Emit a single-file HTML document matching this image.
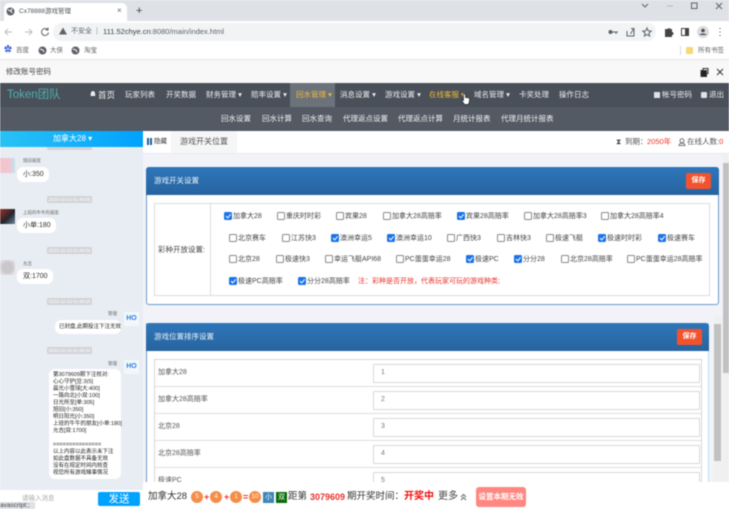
<!DOCTYPE html>
<html lang="zh"><head><meta charset="utf-8"><title>Cx78888游戏管理</title>
<style>
html,body{margin:0;padding:0;background:#fff}
body{width:729px;height:509px;overflow:hidden;position:relative}
#w{position:absolute;left:0;top:0;width:729px;height:509px;overflow:hidden;background:#fff;filter:blur(.4px);font-family:"Liberation Sans","Noto Sans CJK SC",sans-serif;color:#333}
.a{position:absolute}
.t{position:absolute;white-space:nowrap;line-height:0}
.n{font-size:7.5px;color:#eceff1}
.s{font-size:7.5px;color:#f0f2f4}
.y{color:#f0bb3a}
.c{position:absolute;width:6px;height:6px;border:1px solid #8a8a8a;border-radius:1.5px;background:#fff}
.k{background:#1a73e8;border-color:#1a73e8}
.k:after{content:"";position:absolute;left:1.8px;top:-.2px;width:1.6px;height:3.6px;border:solid #fff;border-width:0 1.2px 1.2px 0;transform:rotate(40deg)}
.l{font-size:7px;color:#444}
.p{position:absolute;left:47px;width:45px;height:7px;background:#d2d4d7;border-radius:1px;color:#fff;font-size:4.5px;line-height:7px;text-align:center;white-space:nowrap;overflow:hidden}
.b{position:absolute;background:#fff;border-radius:6px}
.m{font-size:4.5px;color:#666}
.ball{position:absolute;top:491px;width:12px;height:12px;border-radius:50%;background:#f58d47;color:#fff;font-size:6.5px;line-height:12px;text-align:center}
.op{position:absolute;top:497px;line-height:0;color:#e8322a;font-size:9px;font-weight:bold}
.row{position:absolute;left:155px;width:546px;height:26px;border-bottom:1px solid #dedede}
.in{position:absolute;left:373px;width:325px;height:17px;border:1px solid #d8d8d8;background:#fff;border-radius:1px}
.rl{font-size:7px;color:#555}
.iv{font-size:7px;color:#777;left:381px}
</style></head><body><div id="w">

<!-- browser chrome -->
<div class="a" style="left:0;top:0;width:729px;height:21px;background:#dee1e6"></div>
<div class="a" style="left:4px;top:3px;width:123px;height:18px;background:#fff;border-radius:5px 5px 0 0"></div>
<svg class="a" style="left:6px;top:7px" width="9" height="9"><circle cx="4.5" cy="4.5" r="4" fill="#5f6368"/><path d="M2 3l3 1 1 2M6 1.500l-1 2" stroke="#fff" fill="none"/></svg>
<div class="t" style="left:19px;top:12px;font-size:6.5px;color:#4f5358">Cx78888游戏管理</div>
<div class="t" style="left:117px;top:11px;font-size:8px;color:#5f6368">×</div>
<div class="t" style="left:136px;top:11px;font-size:11px;color:#3c4043">+</div>
<svg class="a" style="left:640px;top:0" width="89" height="15" fill="none" stroke="#5f6368"><path d="M2 4l3 3 3-3"/><path d="M27 6h6" stroke="#b5b8bc"/><rect x="51.500" y="3" width="5.500" height="5.500"/><path d="M76 3l6 6M82 3l-6 6"/></svg>

<div class="a" style="left:0;top:21px;width:729px;height:20px;background:#fff"></div>
<div class="a" style="left:53px;top:23px;width:603px;height:18px;background:#f1f3f4;border-radius:9px"></div>
<svg class="a" style="left:3px;top:25px" width="50" height="14" fill="none" stroke="#b9bcc0" stroke-width="1"><path d="M2 7h7M5 4L2 7l3 3"/><path d="M22 7h7M26 4l3 3-3 3"/><path d="M44.500 4.500a3.500 3.500 0 1 0 1 3" stroke="#5f6368"/><path d="M45 2.500v2.500h-2.500" stroke="#5f6368"/></svg>
<svg class="a" style="left:59px;top:27px" width="8" height="8"><path d="M4 .5L8 7.500H0z" fill="#5f6368"/></svg>
<div class="t" style="left:71px;top:32px;font-size:7px;color:#5f6368">不安全</div>
<div class="t" style="left:96px;top:32px;font-size:7px;color:#9aa0a6">|</div>
<div class="t" style="left:103px;top:32px;font-size:7.500px;color:#3c4043">111.52chye.cn<span style="color:#5f6368">:8080/main/index.html</span></div>
<svg class="a" style="left:607px;top:25px" width="122" height="15" fill="none" stroke="#5f6368"><circle cx="3.500" cy="7" r="2" fill="#5f6368" stroke="none"/><path d="M4 7h7M9 7v2"/><path d="M20 6v5h7V6M23.500 9l3-5M24 3.500h3v3"/><path d="M40 3l1.200 2.800 3 .3-2.300 2 .7 3-2.600-1.600-2.600 1.600.7-3-2.300-2 3-.3z"/><path d="M58 4h3a1 1 0 0 1 2 0h2v3a1 1 0 0 1 0 3v2h-7z" fill="#444" stroke="none"/><rect x="74.500" y="3.500" width="7" height="7" stroke="#444"/><rect x="78" y="3.500" width="3.500" height="7" fill="#444" stroke="none"/><circle cx="96" cy="7" r="6" fill="#dadce0" stroke="none"/><circle cx="96" cy="5.500" r="1.800" fill="#4a4f55" stroke="none"/><path d="M92.500 10c.5-2 6.500-2 7 0z" fill="#4a4f55" stroke="none"/><path d="M113 3v1M113 6.500v1M113 10v1" stroke="#444"/></svg>

<div class="a" style="left:0;top:41px;width:729px;height:19px;background:#fff;border-bottom:1px solid #e3e5e8;box-sizing:border-box"></div>
<div class="t" style="left:4px;top:50px;font-size:8px;color:#3155d5">✿</div>
<div class="t" style="left:16px;top:51px;font-size:6.500px;color:#5f6368">百度</div>
<svg class="a" style="left:38px;top:46px" width="9" height="9"><circle cx="4.500" cy="4.500" r="4" fill="#5f6368"/><path d="M2 3l3 1 1 2" stroke="#fff" fill="none"/></svg>
<div class="t" style="left:50px;top:51px;font-size:6.500px;color:#5f6368">大侠</div>
<svg class="a" style="left:71px;top:46px" width="9" height="9"><circle cx="4.500" cy="4.500" r="4" fill="#5f6368"/><path d="M2 3l3 1 1 2" stroke="#fff" fill="none"/></svg>
<div class="t" style="left:84px;top:51px;font-size:6.500px;color:#5f6368">淘宝</div>
<div class="a" style="left:680px;top:46px;width:1px;height:9px;background:#d5d7da"></div>
<div class="a" style="left:686px;top:47px;width:7px;height:7px;background:#f8d775;border-radius:1px"></div>
<div class="t" style="left:698px;top:51px;font-size:6.500px;color:#5f6368">所有书签</div>

<!-- dialog title -->
<div class="a" style="left:0;top:60px;width:729px;height:23px;background:#f8f8f8"></div>
<div class="t" style="left:6px;top:72px;font-size:7.500px;color:#444">修改账号密码</div>
<svg class="a" style="left:700px;top:67px" width="24" height="11" fill="none" stroke="#333"><rect x="3" y="1.500" width="5" height="5"/><rect x="1" y="3.500" width="5.500" height="6" fill="#222"/><path d="M17 2l6 6M23 2l-6 6"/></svg>

<!-- nav -->
<div class="a" style="left:0;top:83px;width:729px;height:24px;background:#4a5059"></div>
<div class="a" style="left:0;top:107px;width:729px;height:24px;background:#545a63"></div>
<div class="a" style="left:290px;top:83px;width:45px;height:24px;background:#6c7279"></div>
<div class="t" style="left:7px;top:95px;font-size:11.500px;color:#4fb0b0">Token团队</div>
<div class="t n" style="left:90px;top:95px;font-size:6px">☗</div>
<div class="t n" style="left:98px;top:95px;font-size:8.500px;color:#f4f4f4">首页</div>
<div class="t n" style="left:125px;top:95px">玩家列表</div>
<div class="t n" style="left:166px;top:95px">开奖数据</div>
<div class="t n" style="left:206px;top:95px">财务管理 ▾</div>
<div class="t n" style="left:251px;top:95px">赔率设置 ▾</div>
<div class="t n y" style="left:296px;top:95px">回水管理 ▾</div>
<div class="t n" style="left:340px;top:95px">消息设置 ▾</div>
<div class="t n" style="left:385px;top:95px">游戏设置 ▾</div>
<div class="t n y" style="left:429px;top:95px">在线客服 ▾</div>
<div class="t n" style="left:474px;top:95px">域名管理 ▾</div>
<div class="t n" style="left:519px;top:95px">卡奖处理</div>
<div class="t n" style="left:559px;top:95px">操作日志</div>
<div class="a" style="left:654px;top:92px;width:6px;height:6px;background:#dfe3e6"></div>
<div class="t n" style="left:662px;top:95px">帐号密码</div>
<div class="a" style="left:701px;top:92px;width:6px;height:6px;background:#dfe3e6;border-radius:1px"></div>
<div class="t n" style="left:709px;top:95px">退出</div>
<svg class="a" style="left:461px;top:93px;z-index:9" width="9" height="12"><path d="M2.500 1v6.500L1 6.500 1 8l2.500 3.500h4L8.500 8V5L4.500 4.500V1z" fill="#fff" stroke="#222" stroke-width=".7"/></svg>

<div class="t s" style="left:221px;top:119px">回水设置</div>
<div class="t s" style="left:262px;top:119px">回水计算</div>
<div class="t s" style="left:302px;top:119px">回水查询</div>
<div class="t s" style="left:343px;top:119px">代理返点设置</div>
<div class="t s" style="left:398px;top:119px">代理返点计算</div>
<div class="t s" style="left:453px;top:119px">月统计报表</div>
<div class="t s" style="left:501px;top:119px">代理月统计报表</div>

<!-- chat -->
<div class="a" style="left:0;top:131px;width:143px;height:378px;background:#e8edf3;overflow:hidden"></div>
<div class="a" style="left:0;top:131px;width:143px;height:16px;background:linear-gradient(90deg,#29c2f5,#00a2ff)"></div>
<div class="t" style="left:53px;top:139px;font-size:8px;color:#fff">加拿大28 ▾</div>

<div class="p" style="top:147px;height:3px;line-height:1px"></div>
<div class="a" style="left:0;top:158px;width:15px;height:15px;background:linear-gradient(90deg,#f3c6cf 60%,#bfe4f0)"></div>
<div class="t m" style="left:23px;top:161px">旭旧朋友</div>
<div class="b" style="left:17px;top:167px;width:32px;height:15px"></div>
<div class="t" style="left:23px;top:175px;font-size:7px;color:#333">小:350</div>

<div class="p" style="top:196px">2023-12-13 01:48:05</div>
<div class="a" style="left:0;top:209px;width:15px;height:15px;background:linear-gradient(135deg,#a0302a,#24252c 55%,#6b8aa0)"></div>
<div class="t m" style="left:23px;top:213px">上班的牛牛的朋友</div>
<div class="b" style="left:17px;top:218px;width:39px;height:15px"></div>
<div class="t" style="left:23px;top:226px;font-size:7px;color:#333">小单:180</div>

<div class="p" style="top:247px">2023-12-13 01:48:09</div>
<div class="a" style="left:0;top:260px;width:15px;height:15px;background:radial-gradient(circle at 50% 50%,#c9c6cc 45%,#eceaec)"></div>
<div class="t m" style="left:23px;top:264px">允吉</div>
<div class="b" style="left:17px;top:269px;width:36px;height:15px"></div>
<div class="t" style="left:23px;top:277px;font-size:7px;color:#333">双:1700</div>

<div class="p" style="top:298px">2023-12-13 01:48:20</div>
<div class="t m" style="left:108px;top:314px">管理</div>
<div class="a" style="left:124px;top:312px;width:15px;height:14px;background:#f3f7fa;color:#2d7fe0;font-size:7px;font-weight:bold;line-height:14px;text-align:center">HO</div>
<div class="b" style="left:55px;top:320px;width:66px;height:14px"></div>
<div class="t" style="left:59px;top:327px;font-size:5.500px;color:#222">已封盘,此期投注下注无效</div>

<div class="p" style="top:347px">2023-12-13 01:48:34</div>
<div class="t m" style="left:108px;top:364px">管理</div>
<div class="a" style="left:124px;top:360px;width:15px;height:14px;background:#f3f7fa;color:#2d7fe0;font-size:7px;font-weight:bold;line-height:14px;text-align:center">HO</div>
<div class="b" style="left:49px;top:369px;width:72px;height:110px"></div>
<div class="a" style="left:53px;top:372px;font-size:5.500px;line-height:7px;color:#222;white-space:nowrap">第3079609期下注核对:<br>心心守护[豆:3(5]<br>晨光小雪球[大:400]<br>一路向北[小双:100]<br>日光所至[单:305]<br>旭旧[小:350]<br>明日阳光[小:350]<br>上班的牛牛的朋友[小单:180]<br>允吉[双:1700]<br><br>===============<br>以上内容以此表示未下注<br>如此盘数据不具备无效<br>没有在规定时间内核查<br>视您所有游戏赌事情况</div>

<div class="a" style="left:0;top:490px;width:143px;height:19px;background:#fff"></div>
<div class="t" style="left:22px;top:499px;font-size:6.500px;color:#aaa">请输入消息</div>
<div class="a" style="left:98px;top:492px;width:42px;height:14px;background:#00a2ff;border-radius:2px;color:#fff;font-size:10.500px;line-height:14px;text-align:center">发送</div>
<div class="a" style="left:0;top:502px;width:35px;height:7px;background:#dee1e6;font-size:6.500px;line-height:7px;color:#444;white-space:nowrap;overflow:hidden">avascript:;</div>

<!-- main -->
<div class="a" style="left:143px;top:131px;width:586px;height:378px;background:#f2f3f8"></div>
<div class="a" style="left:143px;top:131px;width:586px;height:23px;background:#fff;border-bottom:1px solid #e8e9ee;box-sizing:border-box"></div>
<div class="a" style="left:171px;top:131px;width:66px;height:22px;background:#f6f6f6"></div>
<div class="a" style="left:147px;top:138px;width:2px;height:7px;background:#1d5e9b"></div>
<div class="a" style="left:150px;top:138px;width:2px;height:7px;background:#1d5e9b"></div>
<div class="t" style="left:154px;top:142px;font-size:6.500px;color:#333">隐藏</div>
<div class="t" style="left:180px;top:142px;font-size:8px;color:#555">游戏开关位置</div>
<div class="t" style="left:616px;top:142px;font-size:7.500px;color:#444">⧗</div>
<div class="t" style="left:625px;top:142px;font-size:7.500px;color:#555">到期：</div>
<div class="t" style="left:647px;top:142px;font-size:7.500px;color:#e8322a">2050年</div>
<svg class="a" style="left:678px;top:138px" width="8" height="8" fill="none" stroke="#777"><circle cx="4" cy="2.800" r="2"/><path d="M1 7.500c0-3 6-3 6 0z"/></svg>
<div class="t" style="left:687px;top:142px;font-size:7.500px;color:#555">在线人数:<span style="color:#e8322a">0</span></div>

<!-- panel 1 -->
<div class="a" style="left:146px;top:167px;width:573px;height:138px;background:#fff;border:1px solid #6d9cc9;border-top:0;border-radius:3px;box-sizing:border-box"></div>
<div class="a" style="left:146px;top:167px;width:573px;height:28px;background:linear-gradient(#2e76ba,#27649f);border-radius:3px 3px 0 0"></div>
<div class="t" style="left:154px;top:181px;font-size:7.500px;color:#f0f4f8">游戏开关设置</div>
<div class="a" style="left:686px;top:173px;width:25px;height:16px;background:#f4522d;border-radius:2px;color:#fff;font-size:7px;font-weight:bold;line-height:16px;text-align:center">保存</div>
<div class="a" style="left:154px;top:203px;width:556px;height:93px;border:1px solid #dcdcdc;box-sizing:border-box"></div>
<div class="a" style="left:210px;top:203px;width:1px;height:93px;background:#dcdcdc"></div>
<div class="t" style="left:158px;top:250px;font-size:7.500px;color:#444">彩种开放设置:</div>

<div class="c k" style="left:224px;top:212px"></div><div class="t l" style="left:233px;top:217px">加拿大28</div>
<div class="c" style="left:277px;top:212px"></div><div class="t l" style="left:286px;top:217px">重庆时时彩</div>
<div class="c" style="left:336px;top:212px"></div><div class="t l" style="left:345px;top:217px">宾果28</div>
<div class="c" style="left:383px;top:212px"></div><div class="t l" style="left:392px;top:217px">加拿大28高赔率</div>
<div class="c k" style="left:457px;top:212px"></div><div class="t l" style="left:466px;top:217px">宾果28高赔率</div>
<div class="c" style="left:524px;top:212px"></div><div class="t l" style="left:533px;top:217px">加拿大28高赔率3</div>
<div class="c" style="left:601px;top:212px"></div><div class="t l" style="left:610px;top:217px">加拿大28高赔率4</div>

<div class="c" style="left:229px;top:234px"></div><div class="t l" style="left:238px;top:239px">北京赛车</div>
<div class="c" style="left:282px;top:234px"></div><div class="t l" style="left:291px;top:239px">江苏快3</div>
<div class="c k" style="left:331px;top:234px"></div><div class="t l" style="left:340px;top:239px">澳洲幸运5</div>
<div class="c k" style="left:387px;top:234px"></div><div class="t l" style="left:396px;top:239px">澳洲幸运10</div>
<div class="c" style="left:447px;top:234px"></div><div class="t l" style="left:456px;top:239px">广西快3</div>
<div class="c" style="left:497px;top:234px"></div><div class="t l" style="left:506px;top:239px">吉林快3</div>
<div class="c" style="left:546px;top:234px"></div><div class="t l" style="left:555px;top:239px">极速飞艇</div>
<div class="c k" style="left:598px;top:234px"></div><div class="t l" style="left:607px;top:239px">极速时时彩</div>
<div class="c k" style="left:658px;top:234px"></div><div class="t l" style="left:667px;top:239px">极速赛车</div>

<div class="c" style="left:229px;top:255px"></div><div class="t l" style="left:238px;top:260px">北京28</div>
<div class="c" style="left:276px;top:255px"></div><div class="t l" style="left:285px;top:260px">极速快3</div>
<div class="c" style="left:325px;top:255px"></div><div class="t l" style="left:334px;top:260px">幸运飞艇API68</div>
<div class="c" style="left:396px;top:255px"></div><div class="t l" style="left:405px;top:260px">PC蛋蛋幸运28</div>
<div class="c k" style="left:466px;top:255px"></div><div class="t l" style="left:475px;top:260px">极速PC</div>
<div class="c k" style="left:514px;top:255px"></div><div class="t l" style="left:523px;top:260px">分分28</div>
<div class="c" style="left:561px;top:255px"></div><div class="t l" style="left:570px;top:260px">北京28高赔率</div>
<div class="c" style="left:627px;top:255px"></div><div class="t l" style="left:636px;top:260px">PC蛋蛋幸运28高赔率</div>

<div class="c k" style="left:229px;top:277px"></div><div class="t l" style="left:238px;top:282px">极速PC高赔率</div>
<div class="c k" style="left:298px;top:277px"></div><div class="t l" style="left:307px;top:282px">分分28高赔率</div>
<div class="t l" style="left:358px;top:282px;color:#e8322a">注：彩种是否开放，代表玩家可玩的游戏种类;</div>

<!-- panel 2 -->
<div class="a" style="left:146px;top:323px;width:563px;height:170px;background:#fff;border-left:1px solid #6d9cc9;border-right:1px solid #bfe0f5;box-sizing:border-box"></div>
<div class="a" style="left:146px;top:323px;width:563px;height:28px;background:linear-gradient(#2e76ba,#27649f);border-radius:3px 3px 0 0"></div>
<div class="t" style="left:154px;top:337px;font-size:7.500px;color:#f0f4f8">游戏位置排序设置</div>
<div class="a" style="left:677px;top:329px;width:25px;height:16px;background:#f4522d;border-radius:2px;color:#fff;font-size:7px;font-weight:bold;line-height:16px;text-align:center">保存</div>
<div class="a" style="left:154px;top:359px;width:548px;height:130px;border:1px solid #d8d8d8;box-sizing:border-box"></div>
<div class="row" style="top:360px"></div><div class="row" style="top:387px"></div><div class="row" style="top:414px"></div><div class="row" style="top:441px"></div>
<div class="t rl" style="left:158px;top:373px">加拿大28</div><div class="in" style="top:364px"></div><div class="t iv" style="top:373px">1</div>
<div class="t rl" style="left:158px;top:400px">加拿大28高赔率</div><div class="in" style="top:391px"></div><div class="t iv" style="top:400px">2</div>
<div class="t rl" style="left:158px;top:427px">北京28</div><div class="in" style="top:418px"></div><div class="t iv" style="top:427px">3</div>
<div class="t rl" style="left:158px;top:454px">北京28高赔率</div><div class="in" style="top:445px"></div><div class="t iv" style="top:454px">4</div>
<div class="t rl" style="left:158px;top:481px">极速PC</div><div class="in" style="top:472px"></div><div class="t iv" style="top:481px">5</div>

<!-- scrollbars -->
<div class="a" style="left:714px;top:316px;width:8px;height:166px;background:#f0f0f0"></div>
<div class="a" style="left:714px;top:324px;width:7px;height:137px;background:#c1c1c1"></div>
<div class="a" style="left:723px;top:155px;width:6px;height:354px;background:#f0f0f0"></div>
<div class="a" style="left:723px;top:163px;width:6px;height:210px;background:#c1c1c1"></div>

<!-- bottom bar -->
<div class="a" style="left:143px;top:482px;width:586px;height:27px;background:#fff"></div>
<div class="t" style="left:148px;top:497px;font-size:9.500px;color:#333">加拿大28</div>
<div class="ball" style="left:191px">5</div><div class="op" style="left:204px">+</div>
<div class="ball" style="left:210px">4</div><div class="op" style="left:224px">+</div>
<div class="ball" style="left:230px">1</div><div class="op" style="left:243px">=</div>
<div class="ball" style="left:249px">10</div>
<div class="a" style="left:263px;top:492px;width:11px;height:11px;background:#3d85b8;color:#fff;font-size:7px;line-height:11px;text-align:center">小</div>
<div class="a" style="left:276px;top:492px;width:11px;height:11px;background:#0a6b0a;color:#fff;font-size:7px;line-height:11px;text-align:center">双</div>
<div class="t" style="left:288px;top:497px;font-size:9.500px;color:#333">距第</div>
<div class="t" style="left:310px;top:497px;font-size:9px;font-weight:bold;color:#e8322a">3079609</div>
<div class="t" style="left:347px;top:497px;font-size:9.500px;color:#333">期开奖时间：</div>
<div class="t" style="left:404px;top:497px;font-size:10px;font-weight:bold;color:#f01010">开奖中</div>
<div class="t" style="left:438px;top:497px;font-size:10px;color:#444">更多</div>
<svg class="a" style="left:460px;top:493px" width="7" height="8" fill="none" stroke="#666"><path d="M1 4l2.500-2.500L6 4M1 7l2.500-2.500L6 7"/></svg>
<div class="a" style="left:476px;top:487px;width:50px;height:20px;background:#ff8781;border-radius:3px;color:#fff;font-size:7.500px;font-weight:bold;line-height:20px;text-align:center;white-space:nowrap">设置本期无效</div>
</div></body></html>
